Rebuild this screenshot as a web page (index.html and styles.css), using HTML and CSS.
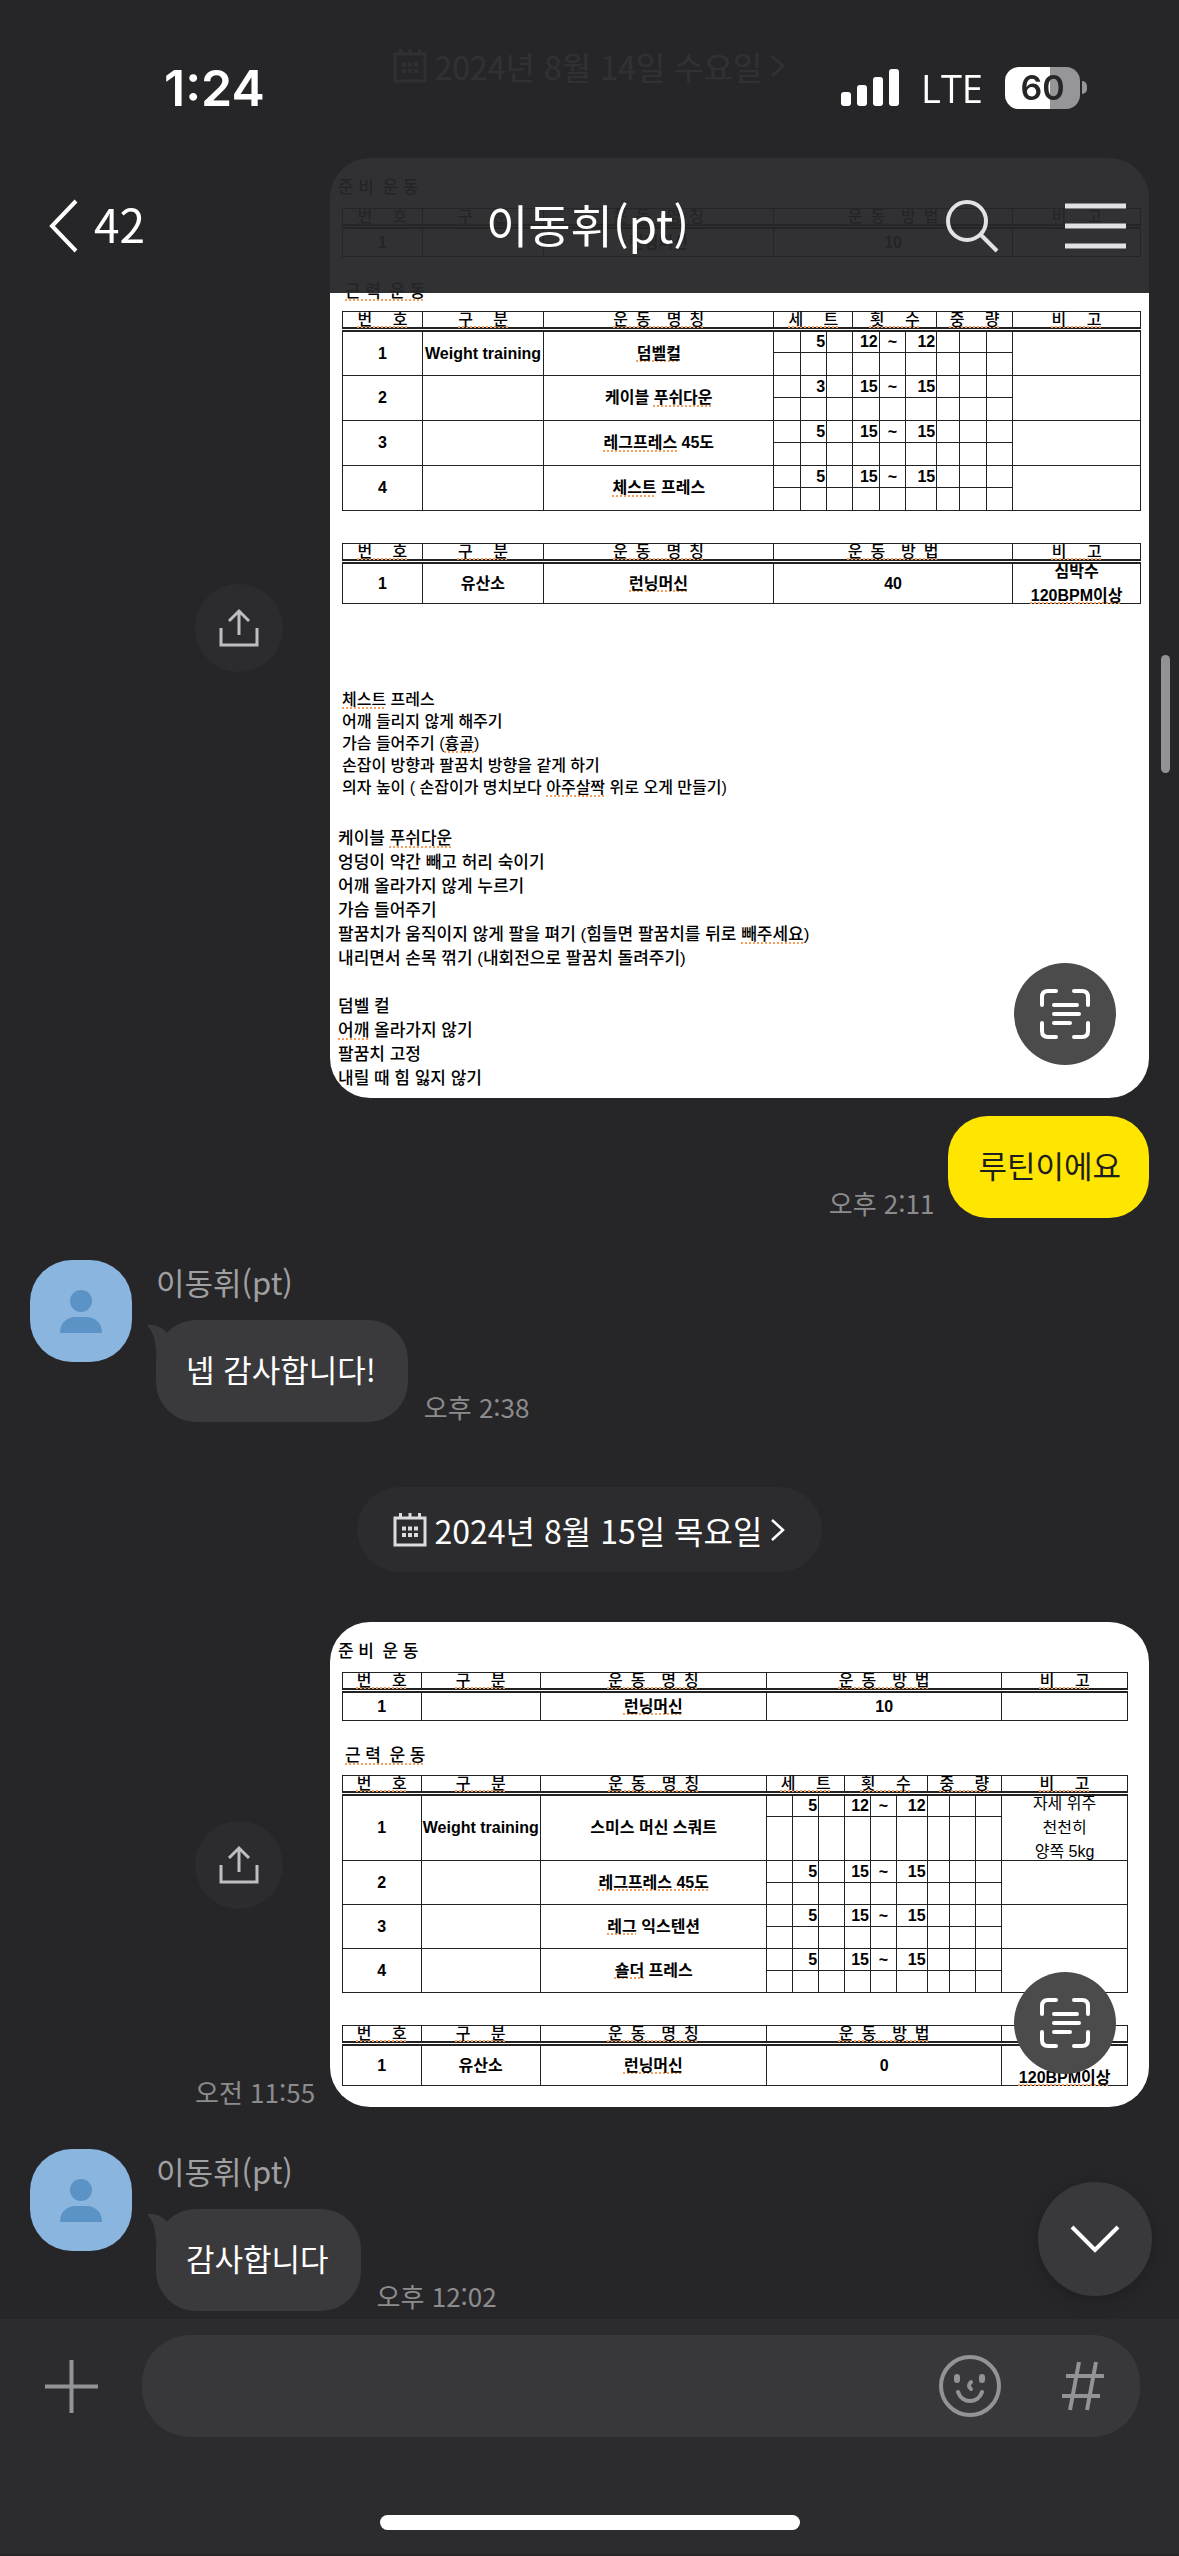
FILE: index.html
```html
<!DOCTYPE html>
<html lang="ko">
<head>
<meta charset="UTF-8">
<meta name="viewport" content="width=device-width, initial-scale=1.0">
<title>이동휘(pt)</title>
<link rel="stylesheet" href="styles.css">
</head>
<body>
<!-- Shared icons -->
<svg class="sprite" aria-hidden="true">
    <symbol id="i-calendar" viewBox="0 0 34 34">
        <path d="M2 5h30v27H2z" fill="none" stroke="currentColor" stroke-width="3"/>
        <path d="M7.500 0v6M17 0v6M26.500 0v6" stroke="currentColor" stroke-width="3"/>
        <path d="M9 15.500h4m2 0h4m2 0h4M9 22h4m2 0h4m2 0h4" stroke="currentColor" stroke-width="4"/>
    </symbol>
    <symbol id="i-next" viewBox="0 0 16 24">
        <path d="M2 2l11 10L2 22" fill="none" stroke="currentColor" stroke-width="2.500"/>
    </symbol>
    <symbol id="i-share" viewBox="0 0 40 40">
        <path d="M2 20v17h36V20M20 27V3M10 13L20 3l10 10" fill="none" stroke="currentColor" stroke-width="3"/>
    </symbol>
    <symbol id="i-scan" viewBox="0 0 50 50">
        <path d="M2 16V8q0-6 6-6h8M34 2h8q6 0 6 6v8M48 34v8q0 6-6 6h-8M16 48H8q-6 0-6-6v-8M14 16h23M14 25h25M14 34h16" fill="none" stroke="currentColor" stroke-width="4" stroke-linecap="round"/>
    </symbol>
    <symbol id="i-person" viewBox="0 0 102 102">
        <circle cx="51" cy="41" r="11"/>
        <path d="M30 73c0-11 8-16 15-16h12c7 0 15 5 15 16z"/>
    </symbol>
</svg>

<header class="header">
    <div class="status">
        <span class="clock">1:24</span>
        <div class="status-right">
            <svg class="signal" viewBox="0 0 58 38" aria-hidden="true">
                <rect x="0" y="23" width="10" height="14" rx="3"/>
                <rect x="16" y="16" width="10" height="21" rx="3"/>
                <rect x="32" y="8" width="10" height="29" rx="3"/>
                <rect x="48" y="0" width="10" height="37" rx="3"/>
            </svg>
            <span class="network">LTE</span>
            <span class="battery">60</span>
        </div>
    </div>
    <nav class="nav">
        <a class="back" href="#">
            <svg width="29" height="54" viewBox="0 0 29 54"><path d="M27 2L3 27l24 25" fill="none" stroke="currentColor" stroke-width="4"/></svg>
            <span>42</span>
        </a>
        <h1>이동휘(pt)</h1>
        <div class="nav-tools">
            <button type="button" aria-label="검색">
                <svg width="54" height="54" viewBox="0 0 54 54"><circle cx="22" cy="22" r="19" fill="none" stroke="currentColor" stroke-width="4"/><path d="M35 35l17 17" stroke="currentColor" stroke-width="4"/></svg>
            </button>
            <button type="button" aria-label="메뉴">
                <svg width="61" height="46" viewBox="0 0 61 46"><path d="M0 3h61M0 23h61M0 43h61" stroke="currentColor" stroke-width="5"/></svg>
            </button>
        </div>
    </nav>
</header>

<main class="chat">
    <button type="button" class="date"><svg class="cal"><use href="#i-calendar"/></svg>2024년 8월 14일 수요일<svg class="next"><use href="#i-next"/></svg></button>

    <div class="row mine">
        <div class="side">
            <button type="button" class="share" aria-label="공유"><svg><use href="#i-share"/></svg></button>
        </div>
        <div class="sheet first">
            <p class="sheet-title">준 비&ensp;운 동</p>
            <table>
                <colgroup><col class="no"><col class="kind"><col class="name"><col><col class="note"></colgroup>
                <thead>
                    <tr><th><u>번&emsp;&nbsp;호</u></th><th><u>구&emsp;&nbsp;분</u></th><th><u>운&ensp;동&emsp;명&ensp;칭</u></th><th><u>운&ensp;동&emsp;방&ensp;법</u></th><th><u>비&emsp;&nbsp;고</u></th></tr>
                </thead>
                <tbody>
                    <tr class="warm"><td>1</td><td></td><td><u>런닝머신</u></td><td>10</td><td></td></tr>
                </tbody>
            </table>
            <p class="sheet-title sub"><u>근 력&ensp;운 동</u></p>
            <table class="main-table">
                <colgroup><col class="no"><col class="kind"><col class="name"><col class="s"><col class="s"><col class="s"><col class="s"><col class="s"><col class="wide"><col class="thin"><col class="s"><col class="s"><col class="note"></colgroup>
                <thead>
                    <tr><th><u>번&emsp;&nbsp;호</u></th><th><u>구&emsp;&nbsp;분</u></th><th><u>운&ensp;동&emsp;명&ensp;칭</u></th><th colspan="3"><u>세&emsp;&nbsp;트</u></th><th colspan="3"><u>횟&emsp;&nbsp;수</u></th><th colspan="3"><u>중&emsp;&nbsp;량</u></th><th><u>비&emsp;&nbsp;고</u></th></tr>
                </thead>
                <tbody>
                    <tr><td rowspan="2">1</td><td rowspan="2">Weight training</td><td rowspan="2"><u>덤벨컬</u></td><td></td><td class="n">5</td><td></td><td class="n">12</td><td>~</td><td class="n">12</td><td></td><td></td><td></td><td rowspan="2"></td></tr>
                    <tr><td></td><td></td><td></td><td></td><td></td><td></td><td></td><td></td><td></td></tr>
                    <tr><td rowspan="2">2</td><td rowspan="2"></td><td rowspan="2">케이블 <u>푸쉬다운</u></td><td></td><td class="n">3</td><td></td><td class="n">15</td><td>~</td><td class="n">15</td><td></td><td></td><td></td><td rowspan="2"></td></tr>
                    <tr><td></td><td></td><td></td><td></td><td></td><td></td><td></td><td></td><td></td></tr>
                    <tr><td rowspan="2">3</td><td rowspan="2"></td><td rowspan="2"><u>레그프레스</u> 45도</td><td></td><td class="n">5</td><td></td><td class="n">15</td><td>~</td><td class="n">15</td><td></td><td></td><td></td><td rowspan="2"></td></tr>
                    <tr><td></td><td></td><td></td><td></td><td></td><td></td><td></td><td></td><td></td></tr>
                    <tr><td rowspan="2">4</td><td rowspan="2"></td><td rowspan="2"><u>체스트</u> 프레스</td><td></td><td class="n">5</td><td></td><td class="n">15</td><td>~</td><td class="n">15</td><td></td><td></td><td></td><td rowspan="2"></td></tr>
                    <tr><td></td><td></td><td></td><td></td><td></td><td></td><td></td><td></td><td></td></tr>
                </tbody>
            </table>
            <table class="cardio">
                <colgroup><col class="no"><col class="kind"><col class="name"><col><col class="note"></colgroup>
                <thead>
                    <tr><th><u>번&emsp;&nbsp;호</u></th><th><u>구&emsp;&nbsp;분</u></th><th><u>운&ensp;동&emsp;명&ensp;칭</u></th><th><u>운&ensp;동&emsp;방&ensp;법</u></th><th><u>비&emsp;&nbsp;고</u></th></tr>
                </thead>
                <tbody>
                    <tr><td>1</td><td>유산소</td><td><u>런닝머신</u></td><td>40</td><td><div class="memo">심박수<br><u>120BPM이상</u></div></td></tr>
                </tbody>
            </table>
            <p class="tips small"><u>체스트</u> 프레스<br>어깨 들리지 않게 해주기<br>가슴 들어주기 (<u>흉골</u>)<br>손잡이 방향과 팔꿈치 방향을 같게 하기<br>의자 높이 ( 손잡이가 명치보다 <u>아주살짝</u> 위로 오게 만들기)</p>
            <p class="tips">케이블 <u>푸쉬다운</u><br>엉덩이 약간 빼고 허리 숙이기<br>어깨 올라가지 않게 누르기<br>가슴 들어주기<br>팔꿈치가 움직이지 않게 팔을 펴기 (힘들면 팔꿈치를 뒤로 <u>빼주세요</u>)<br>내리면서 손목 꺾기 (내회전으로 팔꿈치 돌려주기)</p>
            <p class="tips">덤벨 컬<br><u>어깨</u> 올라가지 않기<br>팔꿈치 고정<br>내릴 때 힘 잃지 않기</p>
            <button type="button" class="scan" aria-label="텍스트 인식"><svg><use href="#i-scan"/></svg></button>
        </div>
    </div>

    <div class="row mine">
        <time>오후 2:11</time>
        <p class="bubble yellow">루틴이에요</p>
    </div>

    <div class="row other">
        <svg class="avatar"><use href="#i-person"/></svg>
        <div class="body">
            <span class="sender">이동휘(pt)</span>
            <div class="line">
                <p class="bubble"><svg class="tail" viewBox="0 0 22 30"><path d="M0 1c8-1 15 2 20 8l2 3-13 18C9 18 7 9 0 1z"/></svg>넵 감사합니다!</p>
                <time>오후 2:38</time>
            </div>
        </div>
    </div>

    <button type="button" class="date"><svg class="cal"><use href="#i-calendar"/></svg>2024년 8월 15일 목요일<svg class="next"><use href="#i-next"/></svg></button>

    <div class="row mine">
        <div class="side">
            <button type="button" class="share" aria-label="공유"><svg><use href="#i-share"/></svg></button>
            <time>오전 11:55</time>
        </div>
        <div class="sheet second">
            <p class="sheet-title">준 비&ensp;운 동</p>
            <table>
                <colgroup><col class="no"><col class="kind"><col class="name"><col><col class="note"></colgroup>
                <thead>
                    <tr><th><u>번&emsp;&nbsp;호</u></th><th><u>구&emsp;&nbsp;분</u></th><th><u>운&ensp;동&emsp;명&ensp;칭</u></th><th><u>운&ensp;동&emsp;방&ensp;법</u></th><th><u>비&emsp;&nbsp;고</u></th></tr>
                </thead>
                <tbody>
                    <tr class="warm"><td>1</td><td></td><td><u>런닝머신</u></td><td>10</td><td></td></tr>
                </tbody>
            </table>
            <p class="sheet-title sub"><u>근 력&ensp;운 동</u></p>
            <table class="main-table">
                <colgroup><col class="no"><col class="kind"><col class="name"><col class="s"><col class="s"><col class="s"><col class="s"><col class="s"><col class="wide"><col class="thin"><col class="s"><col class="s"><col class="note"></colgroup>
                <thead>
                    <tr><th><u>번&emsp;&nbsp;호</u></th><th><u>구&emsp;&nbsp;분</u></th><th><u>운&ensp;동&emsp;명&ensp;칭</u></th><th colspan="3"><u>세&emsp;&nbsp;트</u></th><th colspan="3"><u>횟&emsp;&nbsp;수</u></th><th colspan="3"><u>중&emsp;&nbsp;량</u></th><th><u>비&emsp;&nbsp;고</u></th></tr>
                </thead>
                <tbody>
                    <tr><td rowspan="2">1</td><td rowspan="2">Weight training</td><td rowspan="2">스미스 머신 스쿼트</td><td></td><td class="n">5</td><td></td><td class="n">12</td><td>~</td><td class="n">12</td><td></td><td></td><td></td><td rowspan="2"><div class="memo light">자세 위주<br>천천히<br>양쪽 5kg</div></td></tr>
                    <tr class="tall"><td></td><td></td><td></td><td></td><td></td><td></td><td></td><td></td><td></td></tr>
                    <tr><td rowspan="2">2</td><td rowspan="2"></td><td rowspan="2"><u>레그프레스 45도</u></td><td></td><td class="n">5</td><td></td><td class="n">15</td><td>~</td><td class="n">15</td><td></td><td></td><td></td><td rowspan="2"></td></tr>
                    <tr><td></td><td></td><td></td><td></td><td></td><td></td><td></td><td></td><td></td></tr>
                    <tr><td rowspan="2">3</td><td rowspan="2"></td><td rowspan="2"><u>레그</u> 익스텐션</td><td></td><td class="n">5</td><td></td><td class="n">15</td><td>~</td><td class="n">15</td><td></td><td></td><td></td><td rowspan="2"></td></tr>
                    <tr><td></td><td></td><td></td><td></td><td></td><td></td><td></td><td></td><td></td></tr>
                    <tr><td rowspan="2">4</td><td rowspan="2"></td><td rowspan="2"><u>숄더</u> 프레스</td><td></td><td class="n">5</td><td></td><td class="n">15</td><td>~</td><td class="n">15</td><td></td><td></td><td></td><td rowspan="2"></td></tr>
                    <tr><td></td><td></td><td></td><td></td><td></td><td></td><td></td><td></td><td></td></tr>
                </tbody>
            </table>
            <table class="cardio">
                <colgroup><col class="no"><col class="kind"><col class="name"><col><col class="note"></colgroup>
                <thead>
                    <tr><th><u>번&emsp;&nbsp;호</u></th><th><u>구&emsp;&nbsp;분</u></th><th><u>운&ensp;동&emsp;명&ensp;칭</u></th><th><u>운&ensp;동&emsp;방&ensp;법</u></th><th></th></tr>
                </thead>
                <tbody>
                    <tr><td>1</td><td>유산소</td><td><u>런닝머신</u></td><td>0</td><td><div class="memo"><br><u>120BPM이상</u></div></td></tr>
                </tbody>
            </table>
            <button type="button" class="scan" aria-label="텍스트 인식"><svg><use href="#i-scan"/></svg></button>
        </div>
    </div>

    <div class="row other">
        <svg class="avatar"><use href="#i-person"/></svg>
        <div class="body">
            <span class="sender">이동휘(pt)</span>
            <div class="line">
                <p class="bubble"><svg class="tail" viewBox="0 0 22 30"><path d="M0 1c8-1 15 2 20 8l2 3-13 18C9 18 7 9 0 1z"/></svg>감사합니다</p>
                <time>오후 12:02</time>
            </div>
        </div>
    </div>
</main>

<div class="scrollbar"></div>
<button type="button" class="to-bottom" aria-label="맨 아래로">
    <svg width="50" height="30" viewBox="0 0 50 30"><path d="M2 3l23 23L48 3" fill="none" stroke="currentColor" stroke-width="4"/></svg>
</button>

<footer class="composer">
    <div class="composer-row">
        <button type="button" aria-label="추가">
            <svg width="53" height="53" viewBox="0 0 53 53"><path d="M26.500 0v53M0 26.500h53" stroke="currentColor" stroke-width="4"/></svg>
        </button>
        <div class="field">
            <input type="text" aria-label="메시지 입력">
            <button type="button" aria-label="이모티콘">
                <svg width="64" height="64" viewBox="0 0 64 64" fill="none" stroke="currentColor" stroke-width="4" stroke-linecap="round">
                    <circle cx="32" cy="32" r="29"/>
                    <path d="M19 23v3M44 23v3" stroke-width="6"/>
                    <path d="M33 28q-4 4 0 7"/>
                    <path d="M20 38c4 12 20 12 24 0"/>
                </svg>
            </button>
            <button type="button" aria-label="샵검색">
                <svg width="42" height="50" viewBox="0 0 42 50"><path d="M17 1L8 49M34 1l-9 48M4 15h38M0 35h38" stroke="currentColor" stroke-width="4"/></svg>
            </button>
        </div>
    </div>
    <div class="home"></div>
</footer>
</body>
</html>
```
FILE: styles.css
```css
* {
    box-sizing: border-box;
}
body {
    margin: 0;
    background-color: #262628;
    color: #fff;
    font-family: "Noto Sans CJK KR", sans-serif;
    font-size: 31px;
    line-height: 42px;
}
p, h1 {
    margin: 0;
    font-weight: inherit;
}
button {
    padding: 0;
    border: none;
    background: none;
    color: inherit;
    font: inherit;
    cursor: pointer;
}
button svg {
    display: block;
}
.sprite {
    position: absolute;
    width: 0;
    height: 0;
}

/* Header */
.header {
    position: fixed;
    top: 0;
    left: 0;
    right: 0;
    z-index: 2;
    padding-bottom: 17px;
    background-color: rgba(38, 38, 40, 0.95);
}
.status {
    display: flex;
    align-items: center;
    justify-content: space-between;
    height: 176px;
    padding: 0 91px 0 164px;
}
.clock {
    font-family: Inter, sans-serif;
    font-size: 50px;
    font-weight: 600;
}
.status-right {
    display: flex;
    align-items: center;
    gap: 22px;
}
.signal {
    width: 58px;
    height: 38px;
    fill: #fff;
}
.network {
    font-family: "Open Sans", sans-serif;
    font-size: 38px;
}
.battery {
    position: relative;
    width: 75px;
    border-radius: 14px;
    background: linear-gradient(to right, #fff 60%, #969698 60%);
    color: #262628;
    font-family: Inter, sans-serif;
    font-size: 34px;
    font-weight: 600;
    text-align: center;
    margin-right: 8px;
}
.battery::after {
    content: "";
    position: absolute;
    top: 14px;
    right: -7px;
    width: 5px;
    height: 13px;
    border-radius: 0 5px 5px 0;
    background-color: #969698;
}
.nav {
    display: grid;
    grid-template-columns: 1fr auto 1fr;
    align-items: center;
    height: 100px;
    padding: 0 53px 0 49px;
    font-size: 46px;
}
.nav h1,
.back span {
    padding-bottom: 6px;
    font-size: 46px;
}
.back {
    display: flex;
    align-items: center;
    gap: 16px;
    color: #fff;
    text-decoration: none;
}
.nav-tools {
    display: flex;
    align-items: center;
    justify-content: flex-end;
    gap: 66px;
    color: #e2e2e4;
}

/* Messages */
.chat {
    display: flex;
    flex-direction: column;
    padding: 23px 30px 8px;
}
.date {
    display: flex;
    align-items: center;
    align-self: center;
    height: 85px;
    padding: 0 36px;
    border-radius: 43px;
    background-color: #2c2c2e;
    font-size: 32px;
}
.date:not(:first-child) {
    margin-top: 65px;
}
.cal {
    width: 34px;
    height: 34px;
    margin-right: 8px;
    color: #dcdcde;
}
.next {
    width: 16px;
    height: 24px;
    margin-left: 8px;
}
.row {
    display: flex;
    align-items: flex-end;
}
.mine {
    justify-content: flex-end;
    gap: 14px;
}
.date + .mine {
    margin-top: 50px;
}
.mine + .mine {
    margin-top: 18px;
}
.other {
    gap: 24px;
    margin-top: 42px;
    align-items: flex-start;
}
.side {
    display: grid;
    grid-template-rows: 1fr auto 1fr;
    align-self: stretch;
    min-width: 121px;
}
.side time {
    grid-row: 3;
    align-self: end;
}
.share {
    grid-row: 2;
    display: grid;
    place-items: center;
    width: 88px;
    height: 88px;
    border-radius: 50%;
    background-color: #2c2c2e;
    color: #bebec0;
}
.share svg {
    width: 40px;
    height: 40px;
}
time {
    color: #8c8c8e;
    font-size: 26px;
    line-height: 30px;
}
.bubble {
    position: relative;
    padding: 28px 32px 32px 30px;
    border-radius: 40px;
    background-color: #3a3a3c;
}
.yellow {
    padding-right: 28px;
    background-color: #ffe600;
    color: #1e1e1e;
}
.tail {
    position: absolute;
    top: 4px;
    left: -9px;
    width: 22px;
    height: 30px;
    fill: #3a3a3c;
}
.avatar {
    width: 102px;
    height: 102px;
    border-radius: 42px;
    background-color: #89b5df;
    fill: #5b93c6;
}
.sender {
    display: block;
    height: 44px;
    margin-bottom: 16px;
    color: #a0a0a2;
    line-height: 44px;
}
.line {
    display: flex;
    align-items: flex-end;
    gap: 16px;
}

/* Workout sheets */
.sheet {
    position: relative;
    width: 819px;
    padding: 18px 8px 7px;
    border-radius: 40px;
    background-color: #fff;
    color: #000;
    font-family: "Liberation Sans", "Noto Sans CJK KR", sans-serif;
    font-size: 17px;
    font-weight: 500;
    line-height: 24px;
    overflow: hidden;
}
.second {
    padding: 18px 21px 21px 8px;
}
.sheet u {
    text-decoration: underline dotted #f4a060 2px;
    text-decoration-skip-ink: none;
    text-underline-offset: 2px;
}
.sheet-title {
    margin-bottom: 8px;
}
.sub {
    margin: 23px 0 7px 7px;
}
.sheet table {
    width: calc(100% - 4px);
    margin-left: 4px;
    border-collapse: collapse;
    table-layout: fixed;
    font-size: 16px;
    line-height: 20px;
    text-align: center;
    white-space: nowrap;
}
.no {
    width: 10%;
}
.kind {
    width: 15.2%;
}
.name {
    width: 28.8%;
}
.s {
    width: 3.3%;
}
.wide {
    width: 3.9%;
}
.thin {
    width: 2.9%;
}
.note {
    width: 16%;
}
th, td {
    height: 22px;
    padding: 0;
    border: 1px solid #222;
}
td {
    font-weight: 600;
}
th {
    height: 18px;
    border-bottom: 5px double #222;
    font-weight: 500;
    line-height: 14px;
}
td.n {
    text-align: right;
    padding-right: 1px;
}
.first .main-table tr:nth-child(even) td {
    height: 23px;
}
.warm td {
    height: 30px;
}
.tall td {
    height: 44px;
}
.cardio {
    margin-top: 32px;
}
.cardio td {
    height: 42px;
}
.memo {
    display: flex;
    flex-direction: column;
    justify-content: center;
    height: 38px;
    line-height: 24px;
}
.light {
    height: 60px;
    font-weight: 400;
}
.tips {
    margin-top: 24px;
}
.small {
    margin: 85px 0 28px 4px;
    font-size: 16px;
    line-height: 22px;
}
.scan {
    position: absolute;
    right: 33px;
    bottom: 33px;
    display: grid;
    place-items: center;
    width: 102px;
    height: 102px;
    border-radius: 50%;
    background-color: #4b4b4b;
    color: #fff;
}
.scan svg {
    width: 50px;
    height: 50px;
}

/* Floating controls */
.scrollbar {
    position: fixed;
    top: 655px;
    right: 9px;
    width: 9px;
    height: 118px;
    border-radius: 5px;
    background-color: #929294;
}
.to-bottom {
    position: fixed;
    right: 27px;
    bottom: 260px;
    display: grid;
    place-items: center;
    width: 114px;
    height: 114px;
    border-radius: 50%;
    background-color: #39393b;
    box-shadow: 0 4px 16px rgba(0, 0, 0, 0.2);
}

/* Composer */
.composer {
    position: sticky;
    bottom: 0;
    padding: 16px 0 24px;
    background-color: #2c2c2e;
    color: #919396;
}
.composer-row {
    display: flex;
    align-items: center;
    gap: 44px;
    padding: 0 39px 0 45px;
}
.field {
    display: flex;
    align-items: center;
    flex: 1;
    height: 102px;
    padding: 0 36px 0 32px;
    border-radius: 48px;
    background-color: #38383a;
    gap: 60px;
}
.field input {
    flex: 1;
    min-width: 0;
    border: none;
    outline: none;
    background: none;
    color: #fff;
    font: inherit;
}
.home {
    width: 420px;
    height: 15px;
    margin: 78px auto 0;
    border-radius: 8px;
    background-color: #fff;
}
```
